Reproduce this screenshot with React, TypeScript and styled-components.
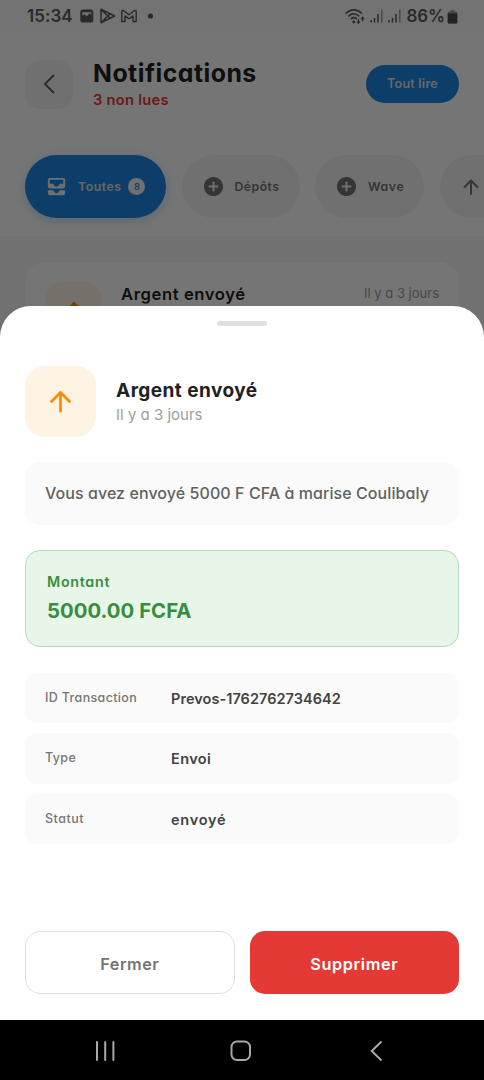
import React from 'react';
import styled, { createGlobalStyle } from 'styled-components';
import { MdAllInbox, MdAddCircle } from 'react-icons/md';

const GlobalStyle = createGlobalStyle`
  * { box-sizing: border-box; }
  body { margin: 0; background: #fff; }
  button { font: inherit; font-feature-settings: inherit; border: 0; padding: 0; margin: 0; background: none; letter-spacing: inherit; }
`;

const Phone = styled.div`
  position: relative;
  display: flex;
  flex-direction: column;
  width: 484px;
  height: 1080px;
  overflow: hidden;
  font-family: Inter, 'Open Sans', sans-serif;
  font-feature-settings: 'cv11';
`;

const Text = styled.span<{ $size: number; $weight?: number; $color: string; $track?: number; $line?: number }>`
  display: block;
  white-space: nowrap;
  font-size: ${p => p.$size}px;
  font-weight: ${p => p.$weight ?? 500};
  color: ${p => p.$color};
  letter-spacing: ${p => p.$track ?? 0}px;
  line-height: ${p => p.$line ?? 20}px;
`;

const Screen = styled.div`
  flex: 1;
  display: flex;
  flex-direction: column;
  background: #f7f7f7;
  overflow: hidden;
`;

const StatusBar = styled.div`
  display: flex;
  align-items: center;
  justify-content: space-between;
  height: 32px;
  flex: none;
  padding: 0 26px 0 27px;
  background: #fafafa;
`;

const StatusGroup = styled.div<{ $gap: number }>`
  display: flex;
  align-items: center;
  gap: ${p => p.$gap}px;
`;

const Header = styled.header`
  display: flex;
  align-items: center;
  height: 104px;
  flex: none;
  padding: 0 25px;
  background: #fff;
`;

const BackButton = styled.button`
  display: flex;
  align-items: center;
  justify-content: center;
  width: 48px;
  height: 49px;
  border-radius: 15px;
  background: #f5f5f5;
`;

const Titles = styled.div`
  flex: 1;
  margin: 2px 0 0 20px;
`;

const ReadAll = styled.button`
  display: flex;
  align-items: center;
  justify-content: center;
  width: 93px;
  height: 38px;
  border-radius: 19px;
  background: #1e88e5;
`;

const Chips = styled.div`
  display: flex;
  gap: 15.5px;
  height: 100px;
  flex: none;
  padding: 19px 0 0 25px;
  background: #fff;
  overflow: hidden;
`;

const Chip = styled.div<{ $width: number; $active?: boolean }>`
  display: flex;
  align-items: center;
  flex: none;
  width: ${p => p.$width}px;
  height: 63px;
  padding-left: 20px;
  border-radius: 32px;
  color: ${p => (p.$active ? '#f2f2f2' : '#757575')};
  background: ${p => (p.$active ? '#1e88e5' : '#f5f5f5')};
  box-shadow: ${p => (p.$active ? '0 3px 12px rgba(30, 136, 229, 0.28)' : 'none')};
`;

const ChipLabel = styled.div`
  margin-left: 10px;
`;

const Count = styled.div`
  display: flex;
  align-items: center;
  justify-content: center;
  width: 17px;
  height: 17px;
  margin-left: 7px;
  border-radius: 50%;
  background: #f5f5f5;
`;

const Feed = styled.div`
  padding: 26px 25px 0;
`;

const FeedCard = styled.article`
  display: flex;
  align-items: flex-start;
  height: 130px;
  padding: 20px 20px 0 21px;
  border-radius: 20px;
  background: #fff;
`;

const Tile = styled.div<{ $size: number; $radius: number }>`
  display: flex;
  align-items: center;
  justify-content: center;
  flex: none;
  width: ${p => p.$size}px;
  height: ${p => p.$size}px;
  border-radius: ${p => p.$radius}px;
  background: #fff3e4;
`;

const FeedTitle = styled.div`
  flex: 1;
  margin-left: 20px;
`;

const Scrim = styled.div`
  position: absolute;
  inset: 0 0 60px;
  background: rgba(0, 0, 0, 0.54);
`;

const Sheet = styled.section`
  position: absolute;
  left: 0;
  right: 0;
  top: 306px;
  bottom: 60.5px;
  display: flex;
  flex-direction: column;
  padding: 15px 25px 25.5px;
  border-radius: 31px 31px 0 0;
  background: #fff;
`;

const Handle = styled.div`
  align-self: center;
  flex: none;
  width: 50px;
  height: 5px;
  border-radius: 2.5px;
  background: #e0e0e0;
`;

const SheetHead = styled.div`
  display: flex;
  align-items: center;
  gap: 20px;
  margin-top: 40px;
`;

const SheetTitles = styled.div`
  padding-bottom: 1px;
`;

const Message = styled.div`
  display: flex;
  align-items: center;
  flex: none;
  height: 63px;
  margin-top: 25px;
  padding: 0 0 2px 20px;
  border-radius: 15px;
  background: #fafafa;
`;

const Amount = styled.div`
  flex: none;
  height: 97px;
  margin-top: 25.4px;
  padding: 20px 21px;
  border: 1.3px solid #b5dab8;
  border-radius: 15px;
  background: #e8f5e9;
`;

const Details = styled.dl`
  display: flex;
  flex-direction: column;
  gap: 10px;
  margin: 25.2px 0 0;
`;

const Detail = styled.div`
  display: flex;
  height: 50.5px;
  padding: 15px 20px 0;
  border-radius: 12px;
  background: #fafafa;
`;

const DetailName = styled.dt`
  width: 126px;
`;

const DetailValue = styled.dd`
  margin: 0;
`;

const Actions = styled.div`
  display: grid;
  grid-template-columns: 1fr 1fr;
  gap: 15px;
  margin-top: auto;
`;

const Action = styled.button<{ $danger?: boolean }>`
  display: flex;
  align-items: center;
  justify-content: center;
  height: 63px;
  padding-top: 2px;
  border-radius: 15px;
  border: ${p => (p.$danger ? '0' : '1.3px solid #e0e0e0')};
  background: ${p => (p.$danger ? '#e53935' : '#fff')};
`;

const NavBar = styled.nav`
  display: flex;
  align-items: center;
  height: 60.5px;
  flex: none;
  padding: 3px 0 0 95px;
  background: #000;
`;

const HomeKey = styled.svg`
  margin: 0 118.5px 0 113.5px;
`;

const ArrowUp = ({ size, color, stroke = 2.2 }: { size: number; color: string; stroke?: number }) => (
  <svg width={size} height={size} viewBox="0 0 24 24" fill="none" stroke={color} strokeWidth={stroke} strokeLinecap="round" strokeLinejoin="round">
    <path d="M12 19.5V5M5 12l7-7 7 7" />
  </svg>
);

const StatusIcons = () => (
  <svg width="75" height="18" viewBox="0 0 75 18" fill="none" stroke="#5c5c5c">
    <rect x="0.3" y="2.6" width="13" height="13" rx="2.6" fill="#5c5c5c" stroke="none" />
    <path d="M2.300 8.600V5.200h9v2.500L9.500 6.300 6.800 9.200 4.800 7.200z" fill="#fafafa" stroke="none" />
    <path d="M21 2.200v13.600L34.500 9zM21.500 2.600l8.500 8.600M21.500 15.400l8.500-8.600" strokeWidth="1.500" strokeLinejoin="round" />
    <path d="M41.800 14.500V4.200l1.300-.9L49 7.700l5.900-4.400 1.300.9v10.300h-3.200V8.900L49 11.800 45 8.900v5.600z" strokeWidth="1.400" strokeLinejoin="round" />
    <circle cx="70.500" cy="9" r="2.600" fill="#5c5c5c" stroke="none" />
  </svg>
);

const Wifi = () => (
  <svg width="20" height="17" viewBox="0 0 20 17" fill="none" stroke="#5c5c5c" strokeWidth="1.600" strokeLinecap="round">
    <path d="M1.200 5.200C5.500.8 12 .8 16.500 5.200M3.800 8c3-3 7.200-3 10 0M6.300 10.700c1.600-1.500 3.700-1.500 5 0" />
    <path d="M8.800 12l1.800 2-1.800 1.800L7 14z" fill="#5c5c5c" stroke="none" />
    <path d="M13.500 11.500v3.700m-1.300-1.300l1.300 1.300 1.300-1.300M17.600 12.800V9.300m-1.300 1.300l1.300-1.300 1.300 1.300" strokeWidth="1.300" />
  </svg>
);

const Signal = () => (
  <svg width="13" height="14" viewBox="0 0 13 14" strokeWidth="1.500">
    <path d="M1 11v2.500M4.500 9v4.500M8 5v8.500" stroke="#5c5c5c" />
    <path d="M11.800 0.500v13" stroke="#a0a0a0" />
  </svg>
);

const Battery = () => (
  <svg width="11" height="15" viewBox="0 0 11 15">
    <rect x="3.500" y="1" width="4" height="2" fill="#a5a5a5" />
    <rect x="0.700" y="2.400" width="9.600" height="12" rx="1.500" fill="#999" />
    <path d="M.7 4.500h9.600v8.400a1.500 1.500 0 0 1-1.500 1.500h-6.600a1.500 1.500 0 0 1-1.500-1.500z" fill="#4d4d4d" />
  </svg>
);

const details = [
  { name: 'ID Transaction', value: 'Prevos-1762762734642', nameTrack: 0.35, valueTrack: 0.05 },
  { name: 'Type', value: 'Envoi', nameTrack: 0.4, valueTrack: 0.4 },
  { name: 'Statut', value: 'envoyé', nameTrack: 0.5, valueTrack: 0.75 },
];

export default function App() {
  return (
    <Phone>
      <GlobalStyle />
      <Screen>
        <StatusBar>
          <StatusGroup $gap={7}>
            <Text $size={17} $weight={600} $color="#5c5c5c" $track={0.05}>15:34</Text>
            <StatusIcons />
          </StatusGroup>
          <StatusGroup $gap={5}>
            <Wifi />
            <Signal />
            <Signal />
            <StatusGroup $gap={2}>
              <Text $size={17} $weight={600} $color="#5c5c5c" $track={-0.1}>86%</Text>
              <Battery />
            </StatusGroup>
          </StatusGroup>
        </StatusBar>

        <Header>
          <BackButton aria-label="Retour">
            <svg width="12" height="20" viewBox="0 0 12 20" fill="none" stroke="#616161" strokeWidth="2" strokeLinecap="round" strokeLinejoin="round">
              <path d="M10.500 1.500L2 10l8.500 8.500" />
            </svg>
          </BackButton>
          <Titles>
            <Text $size={24.8} $weight={700} $color="#212121" $track={0.5} $line={30}>Notifications</Text>
            <Text $size={14.7} $weight={600} $color="#e53935" $track={0.25} $line={25}>3 non lues</Text>
          </Titles>
          <ReadAll><Text $size={12.5} $weight={600} $color="#e0e0e0" $track={0.25}>Tout lire</Text></ReadAll>
        </Header>

        <Chips>
          <Chip $width={141} $active>
            <MdAllInbox size={23} />
            <ChipLabel><Text $size={12.3} $weight={600} $color="#e0e0e0" $track={0.5}>Toutes</Text></ChipLabel>
            <Count><Text $size={9.5} $weight={600} $color="#1e88e5">8</Text></Count>
          </Chip>
          <Chip $width={118}>
            <MdAddCircle size={23} />
            <ChipLabel><Text $size={12.3} $weight={600} $color="#757575" $track={0.45}>Dépôts</Text></ChipLabel>
          </Chip>
          <Chip $width={109}>
            <MdAddCircle size={23} />
            <ChipLabel><Text $size={12.3} $weight={600} $color="#757575" $track={0.6}>Wave</Text></ChipLabel>
          </Chip>
          <Chip $width={120}>
            <ArrowUp size={22} color="#757575" />
          </Chip>
        </Chips>

        <Feed>
          <FeedCard>
            <Tile $size={55} $radius={15}><ArrowUp size={24} color="#fb8c00" /></Tile>
            <FeedTitle><Text $size={16.6} $weight={600} $color="#212121" $track={0.6} $line={24}>Argent envoyé</Text></FeedTitle>
            <Text $size={13} $weight={400} $color="#9e9e9e" $line={22}>Il y a 3 jours</Text>
          </FeedCard>
        </Feed>
      </Screen>

      <NavBar>
        <svg width="21" height="22" viewBox="0 0 21 22" stroke="#a8a8a8" strokeWidth="2" strokeLinecap="round">
          <path d="M2 2v18M10.200 2v18M18.400 2v18" />
        </svg>
        <HomeKey width="22" height="22" viewBox="0 0 22 22" fill="none" stroke="#a8a8a8" strokeWidth="2">
          <rect x="1.500" y="1.500" width="18.500" height="18.500" rx="5.500" />
        </HomeKey>
        <svg width="14" height="22" viewBox="0 0 14 22" fill="none" stroke="#a8a8a8" strokeWidth="2">
          <path d="M11.500 1.500L1.700 11l9.800 9.500" />
        </svg>
      </NavBar>

      <Scrim />

      <Sheet role="dialog">
        <Handle />
        <SheetHead>
          <Tile $size={71} $radius={20}><ArrowUp size={31} color="#fb8c00" stroke={2.1} /></Tile>
          <SheetTitles>
            <Text $size={19} $weight={700} $color="#212121" $track={0.45} $line={28}>Argent envoyé</Text>
            <Text $size={15} $weight={400} $color="#9e9e9e" $line={20}>Il y a 3 jours</Text>
          </SheetTitles>
        </SheetHead>
        <Message>
          <Text $size={16} $weight={450} $color="#616161" $track={0.07}>Vous avez envoyé 5000 F CFA à marise Coulibaly</Text>
        </Message>
        <Amount>
          <Text $size={14.3} $weight={600} $color="#388e3c" $track={0.7} $line={22}>Montant</Text>
          <Text $size={20.3} $weight={700} $color="#388e3c" $track={0.05} $line={36}>5000.00 FCFA</Text>
        </Amount>
        <Details>
          {details.map(d => (
            <Detail key={d.name}>
              <DetailName><Text $size={12.5} $weight={500} $color="#757575" $track={d.nameTrack} $line={19}>{d.name}</Text></DetailName>
              <DetailValue><Text $size={14.5} $weight={600} $color="#424242" $track={d.valueTrack} $line={22}>{d.value}</Text></DetailValue>
            </Detail>
          ))}
        </Details>
        <Actions>
          <Action><Text $size={16.3} $weight={600} $color="#757575" $track={0.5}>Fermer</Text></Action>
          <Action $danger><Text $size={16.3} $weight={600} $color="#fff" $track={0.6}>Supprimer</Text></Action>
        </Actions>
      </Sheet>
    </Phone>
  );
}
